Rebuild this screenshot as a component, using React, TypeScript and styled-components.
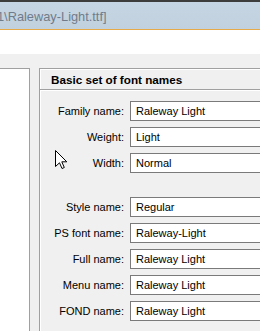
import React from 'react';
import styled, { createGlobalStyle } from 'styled-components';

const GlobalStyle = createGlobalStyle`
  html, body {
    margin: 0;
    padding: 0;
    background: #f0f0f0;
  }
  body {
    font-family: "Liberation Sans", Arial, sans-serif;
  }
`;

const fields = [
  { label: 'Family name:', value: 'Raleway Light' },
  { label: 'Weight:', value: 'Light' },
  { label: 'Width:', value: 'Normal' },
  null,
  { label: 'Style name:', value: 'Regular' },
  { label: 'PS font name:', value: 'Raleway-Light' },
  { label: 'Full name:', value: 'Raleway Light' },
  { label: 'Menu name:', value: 'Raleway Light' },
  { label: 'FOND name:', value: 'Raleway Light' },
];

const Window = styled.div`
  position: relative;
  width: 260px;
  height: 331px;
  overflow: hidden;
  display: flex;
  flex-direction: column;
  background: #f0f0f0;
`;

const TitleBar = styled.div`
  height: 27px;
  border-top: 2px solid #3d3d3d;
  border-bottom: 1px solid #e6ab48;
  background: linear-gradient(#c6d5e3, #c2d1de);
  display: flex;
  align-items: center;
  flex: none;
`;

const TitleText = styled.span`
  margin-left: -3px;
  padding-top: 1px;
  font-size: 12.8px;
  color: #6f7c8b;
  white-space: nowrap;
`;

const Toolbar = styled.div`
  height: 24px;
  background: #ffffff;
  flex: none;
`;

const Body = styled.div`
  flex: 1;
  display: flex;
  gap: 9px;
  padding-top: 14px;
`;

const ListPane = styled.div`
  width: 29px;
  flex: none;
  background: #ffffff;
  border-top: 1px solid #a0a0a0;
  border-right: 1px solid #a0a0a0;
`;

const Group = styled.div`
  width: 300px;
  flex: none;
  border-top: 1px solid #a0a0a0;
  border-left: 1px solid #a0a0a0;
  box-shadow: inset 1px 1px 0 #ffffff;
`;

const GroupHeader = styled.div`
  height: 19px;
  margin-top: 1px;
  padding-left: 11px;
  border-bottom: 1px solid #a0a0a0;
  box-shadow: 0 1px 0 #ffffff;
  font-size: 11.7px;
  font-weight: bold;
  line-height: 19px;
  color: #000000;
`;

const Rows = styled.div`
  display: flex;
  flex-direction: column;
  gap: 6px;
  padding-top: 11px;
`;

const Row = styled.div`
  display: flex;
  align-items: center;
  height: 20px;
`;

const Spacer = styled.div`
  height: 12px;
`;

const Label = styled.span`
  width: 84px;
  text-align: right;
  font-size: 11px;
  color: #000000;
  white-space: nowrap;
`;

const Field = styled.div`
  margin-left: 6px;
  width: 200px;
  height: 18px;
  border: 1px solid #7a7a7a;
  background: #ffffff;
  padding-left: 5px;
  font-size: 11px;
  line-height: 18px;
  color: #000000;
  white-space: nowrap;
`;

const Cursor = styled.svg`
  position: absolute;
  left: 55px;
  top: 150px;
`;

function App() {
  return (
    <Window>
      <GlobalStyle />
      <TitleBar>
        <TitleText>1\Raleway-Light.ttf]</TitleText>
      </TitleBar>
      <Toolbar />
      <Body>
        <ListPane />
        <Group>
          <GroupHeader>Basic set of font names</GroupHeader>
          <Rows>
            {fields.map((f, i) =>
              f ? (
                <Row key={i}>
                  <Label>{f.label}</Label>
                  <Field>{f.value}</Field>
                </Row>
              ) : (
                <Spacer key={i} />
              )
            )}
          </Rows>
        </Group>
      </Body>
      <Cursor width="13" height="20" viewBox="0 0 13 20">
        <path
          d="M0.5 0.5 L0.5 16.5 L4.5 12.8 L7 18.5 L9.3 17.5 L6.8 11.8 L11.8 11.8 Z"
          fill="#ffffff"
          stroke="#000000"
          strokeWidth="1"
          strokeLinejoin="miter"
        />
      </Cursor>
    </Window>
  );
}

export default App;
